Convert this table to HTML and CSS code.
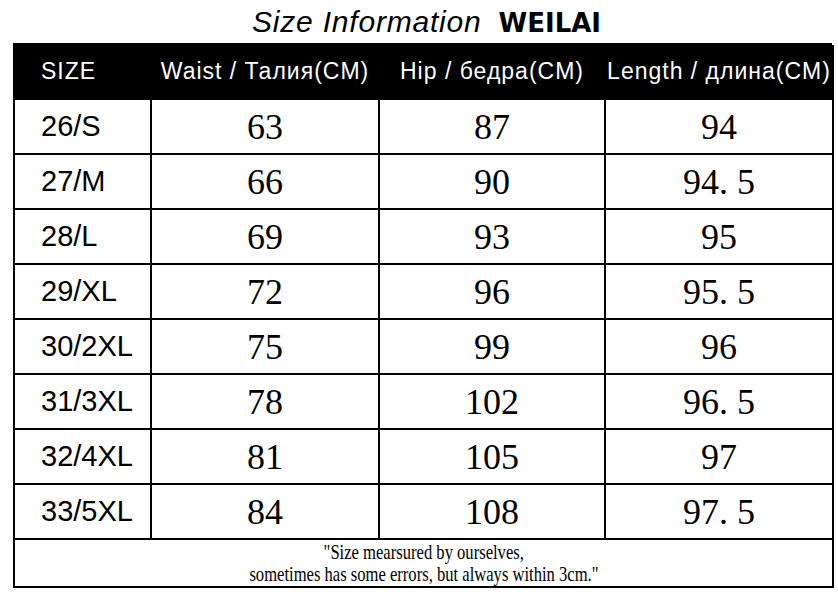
FILE: index.html
```html
<!DOCTYPE html>
<html lang="en">
<head>
<meta charset="utf-8">
<title>Size Information WEILAI</title>
<link rel="stylesheet" href="styles.css">
</head>
<body>
<div class="page">
  <h1 class="title"><span class="script">Size Information</span><span class="brand">WEILAI</span></h1>
  <div class="chart">
    <div class="cell head first">SIZE</div>
    <div class="cell head">Waist / Талия(CM)</div>
    <div class="cell head">Hip / бедра(CM)</div>
    <div class="cell head">Length / длина(CM)</div>

    <div class="cell size">26/S</div><div class="cell num">63</div><div class="cell num">87</div><div class="cell num">94</div>
    <div class="cell size">27/M</div><div class="cell num">66</div><div class="cell num">90</div><div class="cell num">94. 5</div>
    <div class="cell size">28/L</div><div class="cell num">69</div><div class="cell num">93</div><div class="cell num">95</div>
    <div class="cell size">29/XL</div><div class="cell num">72</div><div class="cell num">96</div><div class="cell num">95. 5</div>
    <div class="cell size">30/2XL</div><div class="cell num">75</div><div class="cell num">99</div><div class="cell num">96</div>
    <div class="cell size">31/3XL</div><div class="cell num">78</div><div class="cell num">102</div><div class="cell num">96. 5</div>
    <div class="cell size">32/4XL</div><div class="cell num">81</div><div class="cell num">105</div><div class="cell num">97</div>
    <div class="cell size">33/5XL</div><div class="cell num">84</div><div class="cell num">108</div><div class="cell num">97. 5</div>

    <div class="cell note">
      <span class="note-line">"Size mearsured by ourselves,</span>
      <span class="note-line">sometimes has some errors, but always within 3cm."</span>
    </div>
  </div>
</div>
</body>
</html>
```

FILE: styles.css
```css
* { box-sizing: border-box; }

html, body {
  margin: 0;
  padding: 0;
  background: #fff;
}

.page {
  width: 838px;
  height: 596px;
  padding-left: 13px;
}

.title {
  margin: 0;
  height: 43px;
  display: flex;
  justify-content: center;
  align-items: baseline;
  gap: 17px;
  padding-left: 8px;
  width: 819px;
  line-height: 43px;
  font-weight: normal;
  color: #000;
}

.script {
  font-family: "Liberation Sans", Arial, sans-serif;
  font-style: italic;
  font-weight: normal;
  font-size: 30px;
  letter-spacing: 0.8px;
}

.brand {
  font-family: "DejaVu Sans", "Liberation Sans", sans-serif;
  font-weight: bold;
  font-size: 26px;
}

.chart {
  width: 819px;
  display: grid;
  grid-template-columns: 137px 228px 226px 228px;
  grid-template-rows: repeat(9, 55px) 48px;
  border-left: 2px solid #000;
  border-top: 2px solid #000;
}

.cell {
  border-right: 2px solid #000;
  border-bottom: 2px solid #000;
  display: flex;
  align-items: center;
  justify-content: center;
  color: #000;
  white-space: nowrap;
}

.head {
  background: #000;
  color: #fff;
  font-family: "Liberation Sans", Arial, sans-serif;
  font-size: 23px;
  letter-spacing: 1px;
}

.head.first {
  justify-content: flex-start;
  padding-left: 26px;
}

.size {
  justify-content: flex-start;
  padding-left: 26px;
  font-family: "Liberation Sans", Arial, sans-serif;
  font-size: 29px;
}

.num {
  font-family: "Liberation Serif", "Times New Roman", serif;
  font-size: 36px;
}

.note {
  grid-column: 1 / -1;
  flex-direction: column;
  justify-content: center;
  font-family: "Liberation Serif", "Times New Roman", serif;
  font-size: 21px;
  line-height: 22px;
}

.note-line {
  display: inline-block;
  transform: scaleX(0.79);
}
```
